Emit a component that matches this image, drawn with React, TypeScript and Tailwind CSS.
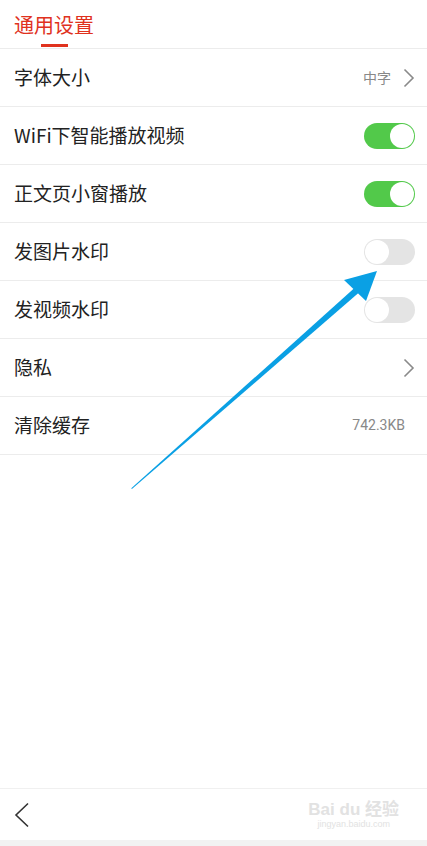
import React from "react";

const font = { fontFamily: '"Noto Sans CJK SC", "Noto Sans", sans-serif' };

type RowType = {
  label: string;
  kind: "link" | "on" | "off" | "value";
  value?: string;
};

const rows: RowType[] = [
  { label: "字体大小", kind: "link", value: "中字" },
  { label: "WiFi下智能播放视频", kind: "on" },
  { label: "正文页小窗播放", kind: "on" },
  { label: "发图片水印", kind: "off" },
  { label: "发视频水印", kind: "off" },
  { label: "隐私", kind: "link" },
  { label: "清除缓存", kind: "value", value: "742.3KB" },
];

const Chevron = () => (
  <svg width="12" height="20" viewBox="0 0 12 20" className="ml-3">
    <path d="M1.5 1.5 L10 10 L1.5 18.5" fill="none" stroke="#8a8a8a" strokeWidth="1.6" />
  </svg>
);

const Toggle = ({ on }: { on: boolean }) => (
  <div
    className={
      on
        ? "w-[51px] h-[26px] rounded-full bg-[#52c94a] flex items-center justify-end px-[1px]"
        : "w-[51px] h-[26px] rounded-full bg-[#e4e4e4] flex items-center justify-start px-[1px]"
    }
  >
    <div className="w-[24px] h-[24px] rounded-full bg-white" />
  </div>
);

const Row = ({ row }: { row: RowType }) => (
  <div className="h-[58px] flex items-center justify-between pl-[14px] pr-[12px] border-b border-[#ececec]">
    <span className="text-[19px] text-[#222]">{row.label}</span>
    <div className="flex items-center">
      {row.kind === "link" && (
        <>
          {row.value && <span className="text-[14px] text-[#888]">{row.value}</span>}
          <Chevron />
        </>
      )}
      {row.kind === "on" && <Toggle on />}
      {row.kind === "off" && <Toggle on={false} />}
      {row.kind === "value" && (
        <span className="text-[14px] text-[#888] mr-[10px]" style={{ fontFamily: "Roboto, sans-serif" }}>
          {row.value}
        </span>
      )}
    </div>
  </div>
);

export default function App() {
  return (
    <div className="relative w-[427px] h-[846px] bg-white flex flex-col overflow-hidden" style={font}>
      <div className="h-[49px] border-b border-[#ececec] flex flex-col pl-[14px]">
        <div className="pt-[12px] w-fit flex flex-col items-center">
          <span className="text-[20px] leading-[26px] text-[#e0321e]">通用设置</span>
          <div className="mt-[6px] w-[27px] h-[3px] bg-[#e0321e]" />
        </div>
      </div>
      <div className="flex flex-col">
        {rows.map((r) => (
          <Row key={r.label} row={r} />
        ))}
      </div>
      <div className="flex-1" />
      <div className="h-[52px] border-t border-[#f0f0f0] flex items-center justify-between pl-[14px] pr-[28px]">
        <svg width="16" height="26" viewBox="0 0 16 26">
          <path d="M14 1.5 L2 13 L14 24.5" fill="none" stroke="#333" strokeWidth="1.6" />
        </svg>
        <div className="flex flex-col items-center leading-none text-[#e2e2e2]">
          <span className="text-[17px] font-bold" style={{ fontFamily: '"Liberation Sans", "Noto Sans CJK SC", sans-serif' }}>
            Bai du 经验
          </span>
          <span className="text-[9px] mt-[2px]" style={{ fontFamily: '"Liberation Sans", sans-serif' }}>
            jingyan.baidu.com
          </span>
        </div>
      </div>
      <div className="h-[6px] bg-[#f2f2f2]" />
      <svg className="absolute left-0 top-0 pointer-events-none" width="427" height="846" viewBox="0 0 427 846">
        <path d="M131 488.5 L132.2 488.8 L359 292.5 L355 287.5 Z" fill="#0aa0e4" />
        <path d="M377 271 L344 280 L366 301 Z" fill="#0aa0e4" />
      </svg>
    </div>
  );
}
